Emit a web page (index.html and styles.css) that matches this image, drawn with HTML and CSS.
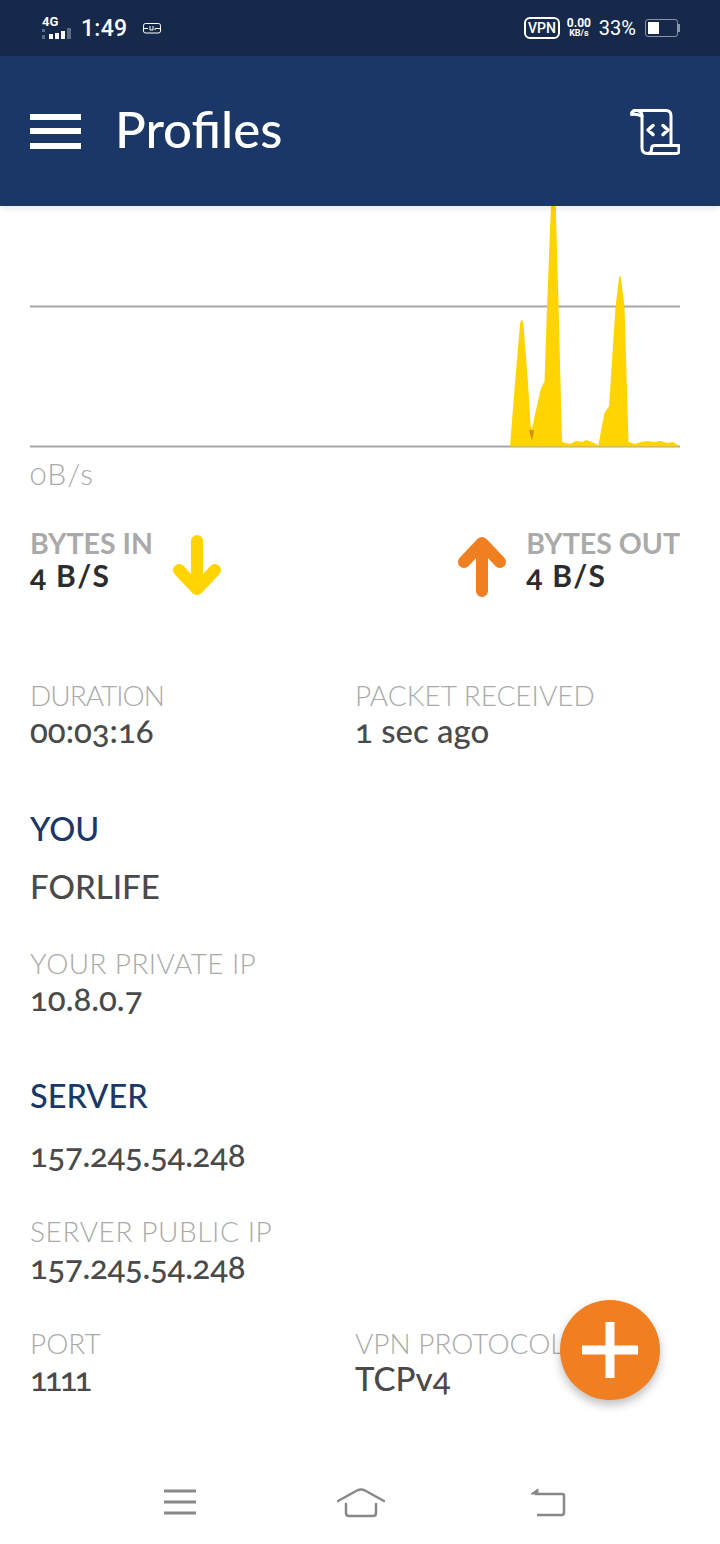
FILE: index.html
```html
<!DOCTYPE html>
<html lang="en">
    <head>
        <meta charset="UTF-8" />
        <meta name="viewport" content="width=device-width, initial-scale=1.0" />
        <title>Profiles</title>
        <link rel="stylesheet" href="styles.css">
    </head>
    <body>
        <div class="phone">
            <div class="statusbar">
                <div class="status-left">
                    <div class="signal">
                        <span class="signal-type">4G</span>
                        <svg class="signal-bars" width="32" height="12" viewBox="0 0 32 12">
                            <rect x="0" y="1" width="3" height="3" fill="#5d6b85"/>
                            <rect x="0" y="7" width="3" height="4" fill="#5d6b85"/>
                            <rect x="7" y="6" width="4" height="5" fill="#fff"/>
                            <rect x="13" y="5" width="4" height="6" fill="#fff"/>
                            <rect x="19" y="3" width="4" height="8" fill="#fff"/>
                            <rect x="25" y="0" width="4" height="11" fill="#5d6b85"/>
                        </svg>
                    </div>
                    <span class="clock">1:49</span>
                    <svg class="sim" width="18" height="11" viewBox="0 0 18 11" fill="none" stroke="#fff" stroke-width="1">
                        <rect x="0.5" y="0.5" width="17" height="9.5" rx="2"/>
                        <path d="M1 5.500h4M7 3v4h3V3M12 7V5.500h5"/>
                    </svg>
                </div>
                <div class="status-right">
                    <span class="vpn-badge">VPN</span>
                    <div class="netspeed"><span>0.00</span><span class="netspeed-unit">KB/s</span></div>
                    <span class="percent">33%</span>
                    <div class="battery"><div class="battery-level"></div></div>
                    <div class="battery-tip"></div>
                </div>
            </div>

            <header class="appbar">
                <div class="appbar-left">
                    <div class="burger"><span></span><span></span><span></span></div>
                    <h1>Profiles</h1>
                </div>
                <svg class="log-icon" width="50" height="48" viewBox="0 0 50 48" fill="none" stroke="#fff" stroke-width="3" stroke-linejoin="round" stroke-linecap="round">
                    <path d="M4 2.500H36Q41 2.500 41 8V36"/>
                    <path d="M12 8V40Q12 45.500 17.500 45.500H46.500Q49 45.500 49 43V37.500H24.500Q21.500 37.500 21.500 41Q21.500 45.500 17.500 45.500"/>
                    <path d="M12 8Q12 2.500 6 2.500Q1.500 2.500 1.500 6.500Q6 5.500 12 8Z"/>
                    <path d="M23 17.500L18 22L23 26.500M33 17.500L38 22L33 26.500" stroke-width="3.500"/>
                </svg>
            </header>

            <main class="content">
                <svg class="graph" width="650" height="242" viewBox="0 0 650 242">
                    <path class="graph-line" d="M0 100.500H650M0 240.500H650"/>
                    <path class="graph-in" d="M480 240.500L485 177L490 118Q491.700 110 493.500 118L498 177L500.500 218Q501.700 226 503 218L509 190.700Q511 180 514.500 175.700L517 101L521 -1H525.700L528.600 101L532 235.700L536 237L540 238L546 235L552 236L556 234L562 236L566 238L568.300 239.500L574.500 207Q576.500 203 579 200.700L585.500 101L589 72Q590 68 591 72L594.500 101L598.500 235.700L605 238L611 236L618 235L624 236L630 235L637 237L643 236L650 240.500Z"/>
                    <path class="graph-out" d="M499 224L504 224L502 235Z"/>
                </svg>
                <div class="graph-axis">0B/s</div>

                <div class="traffic">
                    <div class="traffic-side">
                        <div>
                            <div class="traffic-label">BYTES IN</div>
                            <div class="traffic-value">4 B/S</div>
                        </div>
                        <svg class="arrow" width="50" height="62" viewBox="0 0 50 62" fill="none" stroke="#ffd400" stroke-width="12" stroke-linecap="round" stroke-linejoin="round">
                            <path d="M25 6V53M7 35L25 54L43 35"/>
                        </svg>
                    </div>
                    <div class="traffic-side">
                        <svg class="arrow" width="50" height="62" viewBox="0 0 50 62" fill="none" stroke="#f07f22" stroke-width="12" stroke-linecap="round" stroke-linejoin="round">
                            <path d="M25 56V9M7 27L25 8L43 27"/>
                        </svg>
                        <div>
                            <div class="traffic-label">BYTES OUT</div>
                            <div class="traffic-value">4 B/S</div>
                        </div>
                    </div>
                </div>

                <div class="pair pair-duration">
                    <div>
                        <div class="label label-duration">DURATION</div>
                        <div class="value">00:03:16</div>
                    </div>
                    <div>
                        <div class="label">PACKET RECEIVED</div>
                        <div class="value">1 sec ago</div>
                    </div>
                </div>

                <h2 class="section-title title-you">YOU</h2>
                <div class="value name">FORLIFE</div>
                <div class="label label-ip">YOUR PRIVATE IP</div>
                <div class="value">10.8.0.7</div>

                <h2 class="section-title title-server">SERVER</h2>
                <div class="value name name-server value-ip">157.245.54.248</div>
                <div class="label label-ip label-public">SERVER PUBLIC IP</div>
                <div class="value value-ip">157.245.54.248</div>

                <div class="pair pair-port">
                    <div>
                        <div class="label">PORT</div>
                        <div class="value value-port">1111</div>
                    </div>
                    <div>
                        <div class="label">VPN PROTOCOL</div>
                        <div class="value">TCPv4</div>
                    </div>
                </div>
            </main>

            <div class="fab">
                <svg width="56" height="56" viewBox="0 0 56 56"><path d="M23.500 0h9v23.500H56v9H32.500V56h-9V32.500H0v-9h23.500z" fill="#fff"/></svg>
            </div>

            <nav class="navbar">
                <svg width="34" height="28" viewBox="0 0 34 28" stroke="#888" stroke-width="3" fill="none">
                    <path d="M1 2H33M1 13H33M1 24H33"/>
                </svg>
                <svg class="nav-home" width="48" height="32" viewBox="0 0 48 32" stroke="#888" stroke-width="2.500" fill="none" stroke-linecap="round" stroke-linejoin="round">
                    <path d="M1 14L20 3.500Q24 1.500 28 3.500L47 14"/>
                    <path d="M9 17V26Q9 29 12 29H36Q39 29 39 26V17"/>
                </svg>
                <svg width="36" height="30" viewBox="0 0 36 30" stroke="#888" stroke-width="2.500" fill="none" stroke-linejoin="round">
                    <path d="M5 6H32Q34 6 34 8V24Q34 27 32 27H7"/>
                    <path d="M1 6L8 1V6Z" fill="#888" stroke-width="1"/>
                </svg>
            </nav>
        </div>
    </body>
</html>
```

FILE: styles.css
```css
* {
    box-sizing: border-box;
}
html,
body {
    margin: 0;
    padding: 0;
    background: #fff;
}
.phone {
    position: relative;
    width: 720px;
    height: 1544px;
    overflow: hidden;
    font-family: "Lato", "Open Sans", sans-serif;
    font-variant-numeric: oldstyle-nums;
}

/* status bar */
.statusbar {
    height: 56px;
    padding: 0 40px 0 42px;
    background: #16294a;
    color: #fff;
    font-family: "Roboto", sans-serif;
    font-variant-numeric: normal;
    display: flex;
    justify-content: space-between;
    align-items: center;
}
.status-left,
.status-right {
    display: flex;
    align-items: center;
}
.signal {
    width: 39px;
    display: flex;
    flex-direction: column;
}
.signal-type {
    font-size: 13px;
    line-height: 11px;
    font-weight: 700;
}
.signal-bars {
    margin-top: 1px;
}
.clock {
    font-size: 23px;
    font-weight: 500;
    letter-spacing: 0.3px;
}
.sim {
    margin-left: 16px;
}
.vpn-badge {
    width: 36px;
    height: 22px;
    margin-right: 6px;
    border: 2px solid #fff;
    border-radius: 6px;
    font-size: 14px;
    line-height: 18px;
    font-weight: 500;
    text-align: center;
}
.netspeed {
    width: 26px;
    margin-right: 7px;
    display: flex;
    flex-direction: column;
    align-items: center;
    font-size: 12px;
    line-height: 11px;
    font-weight: 700;
}
.netspeed-unit {
    font-size: 9px;
    line-height: 9px;
}
.percent {
    font-size: 20px;
    margin-right: 9px;
}
.battery {
    width: 33px;
    height: 18px;
    padding: 2px;
    border: 1px solid #8a94a8;
    border-radius: 3px;
}
.battery-level {
    width: 11px;
    height: 100%;
    background: #fff;
}
.battery-tip {
    width: 2px;
    height: 8px;
    background: #8a94a8;
}

/* app bar */
.appbar {
    position: relative;
    height: 150px;
    padding: 0 40px 0 30px;
    background: #1a3768;
    box-shadow: 0 3px 6px rgba(0, 0, 0, 0.08);
    color: #fff;
    display: flex;
    justify-content: space-between;
    align-items: center;
}
.appbar-left {
    display: flex;
    align-items: center;
}
.burger {
    width: 51px;
    height: 35px;
    margin-right: 34px;
    display: flex;
    flex-direction: column;
    justify-content: space-between;
}
.burger span {
    height: 6px;
    background: #fff;
}
.appbar h1 {
    margin: 0 0 4px;
    font-size: 51px;
    line-height: 56px;
    font-weight: 500;
}
.log-icon {
    margin-top: 2px;
}

/* main block */
.content {
    padding: 0 40px 0 30px;
}
.graph {
    display: block;
}
.graph-line {
    stroke: #a8a8a8;
    stroke-width: 2;
    fill: none;
}
.graph-in {
    fill: #ffd400;
}
.graph-out {
    fill: #d98a12;
}
.graph-axis {
    margin-top: 9px;
    font-size: 30px;
    line-height: 32px;
    letter-spacing: 1px;
    color: #aaa;
    font-weight: 300;
}
.traffic {
    margin-top: 37px;
    display: flex;
    justify-content: space-between;
}
.traffic-side {
    display: flex;
    align-items: flex-start;
    gap: 19px;
}
.arrow {
    margin-top: 9px;
}
.traffic-label {
    font-size: 28.5px;
    line-height: 34px;
    font-weight: 700;
    color: #aaa;
}
.traffic-value {
    font-size: 30px;
    line-height: 31px;
    font-weight: 700;
    letter-spacing: 1.300px;
    color: #2c2c2c;
}
.pair {
    display: grid;
    grid-template-columns: 325px 1fr;
}
.pair-duration {
    margin-top: 82px;
}
.pair-port {
    margin-top: 42px;
}
.label {
    font-size: 28px;
    line-height: 32px;
    font-weight: 300;
    color: #aaa;
    white-space: nowrap;
}
.label-duration {
    letter-spacing: -1px;
}
.value {
    font-size: 33px;
    line-height: 38px;
    font-weight: 500;
    color: #4a4a4a;
}
.value-ip {
    letter-spacing: -0.3px;
}
.value-port {
    letter-spacing: -3px;
}
.section-title {
    margin: 0;
    font-size: 32.5px;
    line-height: 38px;
    font-weight: 500;
    color: #1a3768;
}
.title-you {
    margin-top: 61px;
}
.title-server {
    margin-top: 60px;
}
.name {
    margin-top: 19px;
}
.name-server {
    margin-top: 20px;
}
.label-ip {
    margin-top: 42px;
    letter-spacing: 0.4px;
}
.label-public {
    margin-top: 42px;
    letter-spacing: 0.6px;
}

/* floating button */
.fab {
    position: absolute;
    left: 560px;
    top: 1300px;
    width: 100px;
    height: 100px;
    border-radius: 50%;
    background: #f07f22;
    box-shadow: 0 5px 10px rgba(0, 0, 0, 0.25);
    display: flex;
    justify-content: center;
    align-items: center;
}

/* android nav */
.navbar {
    position: absolute;
    left: 0;
    right: 0;
    bottom: 25px;
    padding: 0 154px 0 163px;
    display: flex;
    justify-content: space-between;
    align-items: center;
}
.nav-home {
    margin-right: 6px;
}
```
